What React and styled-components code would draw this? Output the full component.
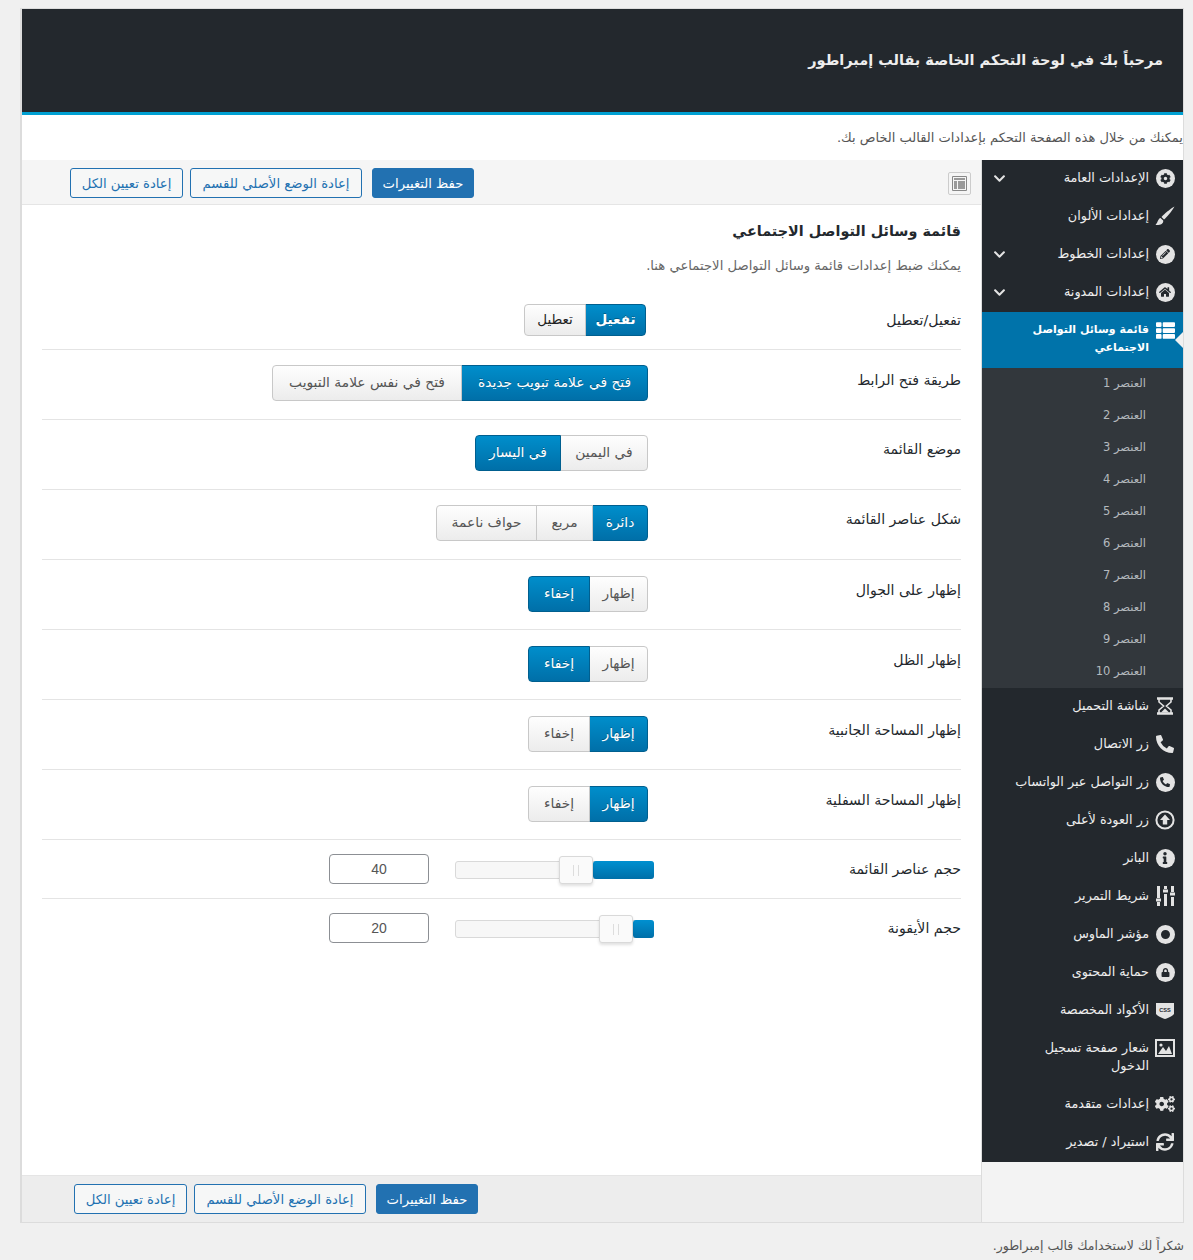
import React from 'react';
import styled, { createGlobalStyle } from 'styled-components';
import {
  FaCog, FaChevronDown, FaPencilAlt, FaHome, FaThList, FaPhoneAlt, FaInfo, FaLock, FaCogs, FaSync,
} from 'react-icons/fa';

const Global = createGlobalStyle`
  html, body { margin: 0; padding: 0; background: #f0f0f0; }
  body { font-family: "DejaVu Sans", "Noto Sans", sans-serif; font-size: 13px; color: #444; }
  * { box-sizing: border-box; }
`;

const Page = styled.div`
  direction: rtl;
  width: 1193px;
  height: 1260px;
  padding: 8px 9px 0 20px;
  overflow: hidden;
`;
const Box = styled.div`
  border: 1px solid #dcdcdc;
  border-left-width: 2px;
  background: #f3f3f3;
`;
const Header = styled.header`
  height: 106px;
  background: #23282d;
  border-bottom: 3px solid #00a0d2;
  padding: 0 20px 2px;
  display: flex;
  align-items: center;
`;
const Title = styled.h1`
  margin: 0;
  color: #eee;
  font-size: 14.5px;
  font-weight: 700;
  line-height: 24px;
`;
const Intro = styled.p`
  margin: 0;
  height: 45px;
  background: #fff;
  font-size: 13px;
  line-height: 45px;
  color: #555;
`;
const Columns = styled.div`
  display: flex;
  align-items: stretch;
`;
const Side = styled.nav`
  width: 201px;
  flex: none;
  align-self: flex-start;
  background: #23282d;
`;
const Item = styled.div`
  position: relative;
  display: flex;
  align-items: flex-start;
  padding: 9px 8px 11px 10px;
  color: ${p => (p.$active ? '#fff' : '#eee')};
  background: ${p => (p.$active ? '#0073aa' : 'transparent')};
  font-weight: ${p => (p.$active ? 700 : 400)};
  font-size: ${p => (p.$active ? 11 : 12.8)}px;
  line-height: 18px;
  ${p => p.$active && `
    &::after {
      content: '';
      position: absolute;
      right: 0;
      top: 20px;
      border: 8px solid transparent;
      border-right: 8px solid #f1f1f1;
      border-left: 0;
    }
  `}
`;
const IconSlot = styled.span`
  width: 20px;
  height: 18px;
  flex: none;
  margin-left: 6px;
  display: flex;
  align-items: center;
  justify-content: center;
  color: ${p => (p.$active ? '#fff' : '#e3e3e3')};
`;
const Disc = styled.span`
  width: 19px;
  height: 19px;
  flex: none;
  border-radius: 50%;
  background: #e3e3e3;
  color: #23282d;
  display: flex;
  align-items: center;
  justify-content: center;
`;
const ItemLabel = styled.span`
  flex: 1;
  min-width: 0;
  max-width: 138px;
`;
const Chevron = styled.span`
  flex: none;
  display: flex;
  align-items: center;
  height: 18px;
  margin-right: auto;
  color: #e3e3e3;
  padding-left: 1px;
`;
const SubList = styled.div`
  background: #32373c;
`;
const SubItem = styled.div`
  height: 32px;
  line-height: 31px;
  padding-right: 37px;
  color: #b4b9be;
  font-size: 11.5px;
`;
const Main = styled.main`
  flex: 1;
  min-width: 0;
  display: flex;
  flex-direction: column;
  border-right: 1px solid #dcdcdc;
`;
const Bar = styled.div`
  height: ${p => p.$h}px;
  flex: none;
  display: flex;
  align-items: center;
  justify-content: space-between;
  background: ${p => (p.$footer ? '#ededed' : '#f5f5f5')};
  border-${p => (p.$footer ? 'top' : 'bottom')}: 1px solid #e5e5e5;
  padding-top: ${p => (p.$footer ? 0 : 2)}px;
  padding-right: 10px;
  padding-left: ${p => p.$left}px;
`;
const Expand = styled.span`
  width: 23px;
  height: 23px;
  border: 1px solid #ccc;
  border-radius: 2px;
  background: #f5f5f5;
  display: flex;
  align-items: center;
  justify-content: center;
`;
const Actions = styled.div`
  display: flex;
  align-items: center;
`;
const ActionButton = styled.button`
  font: inherit;
  font-size: 13.2px;
  height: 30px;
  width: ${p => p.$w}px;
  padding: 0;
  margin-left: ${p => p.$gap || 0}px;
  border: 1px solid #2271b1;
  border-radius: 3px;
  background: ${p => (p.$primary ? '#2271b1' : '#f6f7f7')};
  color: ${p => (p.$primary ? '#fff' : '#2271b1')};
`;
const Content = styled.div`
  flex: 1;
  min-height: 970px;
  background: #fff;
  padding: 0 20px;
`;
const SectionTitle = styled.h2`
  margin: 0;
  padding-top: 14px;
  font-size: 14.4px;
  line-height: 24px;
  font-weight: 700;
  color: #23282d;
`;
const SectionText = styled.p`
  margin: 0;
  padding-top: 14px;
  height: 47px;
  font-size: 13.2px;
  line-height: 18px;
  color: #666;
`;
const Row = styled.div`
  display: flex;
  height: ${p => p.$h}px;
  padding-top: ${p => p.$pad}px;
  border-bottom: ${p => (p.$last ? '0' : '1px solid #e4e4e4')};
`;
const Label = styled.div`
  width: 313px;
  flex: none;
  font-size: 14.1px;
  line-height: 20px;
  color: #23282d;
  padding-top: ${p => p.$top}px;
`;
const Segments = styled.div`
  display: flex;
  height: ${p => p.$h}px;
  margin-right: ${p => p.$right || 0}px;
`;
const Segment = styled.button`
  font: inherit;
  font-size: ${p => (p.$strong ? 13.5 : 13.8)}px;
  font-weight: ${p => (p.$strong && p.$on ? 700 : 400)};
  width: ${p => p.$w}px;
  padding: 0 0 2px;
  border: 1px solid ${p => (p.$on ? '#005f8f' : '#c8c8c8')};
  background: ${p => (p.$on ? 'linear-gradient(#008ecb, #006fa8)' : 'linear-gradient(#fefefe, #ececec)')};
  color: ${p => (p.$on ? '#fff' : p.$strong ? '#222' : '#555')};
  text-shadow: ${p => (p.$on ? '0 -1px 0 rgba(0,0,0,.3)' : 'none')};
  &:first-child { border-radius: 0 4px 4px 0; }
  &:last-child { border-radius: 4px 0 0 4px; }
  &:not(:first-child) { margin-right: -1px; }
`;
const SliderField = styled.div`
  display: flex;
  align-items: center;
  height: 30px;
  margin-right: -6px;
`;
const Track = styled.div`
  position: relative;
  width: 199px;
  height: 18px;
  flex: none;
  margin-top: 2px;
  border-radius: 3px;
  border: 1px solid #d9d9d9;
  background: #f7f7f7;
`;
const Fill = styled.div`
  position: absolute;
  top: -1px;
  bottom: -1px;
  right: -1px;
  border-radius: 3px;
  background: linear-gradient(#0090d0, #006fa8);
`;
const Handle = styled.div`
  position: absolute;
  top: -6px;
  width: 34px;
  height: 28px;
  border: 1px solid #d9d9d9;
  border-radius: 3px;
  background: #fafafa;
  box-shadow: 0 2px 3px rgba(0,0,0,.12);
  &::before {
    content: '';
    position: absolute;
    top: 8px;
    left: 13px;
    width: 4px;
    height: 11px;
    border-left: 1px solid #ddd;
    border-right: 1px solid #ddd;
  }
`;
const NumberBox = styled.div`
  width: 100px;
  height: 30px;
  margin-right: 26px;
  border: 1px solid #8c8f94;
  border-radius: 4px;
  background: #fff;
  display: flex;
  align-items: center;
  justify-content: center;
  font-family: "Liberation Sans", sans-serif;
  font-size: 14px;
  color: #555;
`;
const FooterNote = styled.p`
  margin: 0;
  padding-top: 13px;
  font-size: 12.5px;
  line-height: 20px;
  color: #555;
`;

const D = ({ children }) => <Disc>{children}</Disc>;

const Brush = () => (
  <svg width="20" height="20" viewBox="0 0 20 20" fill="currentColor">
    <path d="M19.5 .5 C15 3 9 8 6.5 11 L9 13.5 C12 11 17 5 19.5 .5Z" />
    <path d="M5.5 12 C3 12.5 3.2 16 .5 19 C5 19.5 8.8 17.5 8.2 14.4Z" />
  </svg>
);
const Hourglass = () => (
  <svg width="18" height="18" viewBox="0 0 18 18" fill="none" stroke="currentColor">
    <path d="M1 1.5H17M1 16.5H17" strokeWidth="2.4" />
    <path d="M3 2V5L7.6 9L3 13V16M15 2V5L10.4 9L15 13V16" strokeWidth="1.6" />
    <path d="M5 15.5L9 11.5L13 15.5Z" fill="currentColor" strokeWidth="0" />
  </svg>
);
const Ring = () => (
  <svg width="19" height="19" viewBox="0 0 19 19"><circle cx="9.5" cy="9.5" r="7" fill="none" stroke="currentColor" strokeWidth="5" /></svg>
);
const UpRing = () => (
  <svg width="20" height="20" viewBox="0 0 20 20">
    <circle cx="10" cy="10" r="8.6" fill="none" stroke="currentColor" strokeWidth="2" />
    <path d="M10 4.6L15 10H12.2V14.6H7.8V10H5Z" fill="currentColor" />
  </svg>
);
const Sliders = () => (
  <svg width="19" height="20" viewBox="0 0 19 20" fill="currentColor">
    <path d="M1 0h3v12H1zM1 16h3v4H1zM0 12.5h5v3H0z" />
    <path d="M8 0h3v3H8zM8 8h3v12H8zM7 3.5h5v3H7z" />
    <path d="M15 0h3v6h-3zM15 11h3v9h-3zM14 6.5h5v3h-5z" />
  </svg>
);
const Shield = () => (
  <svg width="20" height="20" viewBox="0 0 20 20">
    <path d="M1 3H19V14C16 17 13 18 10 19C7 18 4 17 1 14Z" fill="currentColor" />
    <text x="10" y="11.5" fontSize="5.6" fontWeight="700" textAnchor="middle" fill="#23282d" fontFamily="Liberation Sans, sans-serif" direction="ltr">CSS</text>
  </svg>
);
const Picture = () => (
  <svg width="20" height="18" viewBox="0 0 20 18">
    <path d="M1 1H19V17H1Z" fill="none" stroke="currentColor" strokeWidth="2" />
    <path d="M3 15L8 8L11 12L14 7L17 15Z" fill="currentColor" />
    <circle cx="6" cy="6" r="1.6" fill="currentColor" />
  </svg>
);

const menuTop = [
  { t: 'الإعدادات العامة', i: <D><FaCog size={11} /></D>, c: true },
  { t: 'إعدادات الألوان', i: <Brush /> },
  { t: 'إعدادات الخطوط', i: <D><FaPencilAlt size={10} /></D>, c: true },
  { t: 'إعدادات المدونة', i: <D><FaHome size={12} /></D>, c: true },
];
const subs = Array.from({ length: 10 }, (_, i) => `العنصر ${i + 1}`);
const menuBottom = [
  { t: 'شاشة التحميل', i: <Hourglass /> },
  { t: 'زر الاتصال', i: <FaPhoneAlt size={18} /> },
  { t: 'زر التواصل عبر الواتساب', i: <D><FaPhoneAlt size={10} /></D> },
  { t: 'زر العودة لأعلى', i: <UpRing /> },
  { t: 'البانر', i: <D><FaInfo size={12} /></D> },
  { t: 'شريط التمرير', i: <Sliders /> },
  { t: 'مؤشر الماوس', i: <Ring /> },
  { t: 'حماية المحتوى', i: <D><FaLock size={9} /></D> },
  { t: 'الأكواد المخصصة', i: <Shield /> },
  { t: 'شعار صفحة تسجيل الدخول', i: <Picture /> },
  { t: 'إعدادات متقدمة', i: <FaCogs size={20} /> },
  { t: 'استيراد / تصدير', i: <FaSync size={18} /> },
];

const ButtonSet = () => (
  <Actions>
    <ActionButton $primary $w={102} $gap={10}>حفظ التغييرات</ActionButton>
    <ActionButton $w={172} $gap={7}>إعادة الوضع الأصلي للقسم</ActionButton>
    <ActionButton $w={113}>إعادة تعيين الكل</ActionButton>
  </Actions>
);

const rows = [
  { l: 'تفعيل/تعطيل', pad: 14, h: 60, top: 6, sh: 32, right: 2, strong: true, seg: [['تفعيل', 61, true], ['تعطيل', 62, false]] },
  { l: 'طريقة فتح الرابط', pad: 15, h: 70, top: 5, sh: 36, seg: [['فتح في علامة تبويب جديدة', 187, true], ['فتح في نفس علامة التبويب', 190, false]] },
  { l: 'موضع القائمة', pad: 15, h: 70, top: 4, sh: 36, seg: [['في اليمين', 88, false], ['في اليسار', 86, true]] },
  { l: 'شكل عناصر القائمة', pad: 15, h: 70, top: 4, sh: 36, seg: [['دائرة', 56, true], ['مربع', 57, false], ['حواف ناعمة', 101, false]] },
  { l: 'إظهار على الجوال', pad: 16, h: 70, top: 4, sh: 36, seg: [['إظهار', 59, false], ['إخفاء', 62, true]] },
  { l: 'إظهار الظل', pad: 16, h: 70, top: 4, sh: 36, seg: [['إظهار', 59, false], ['إخفاء', 62, true]] },
  { l: 'إظهار المساحة الجانبية', pad: 16, h: 70, top: 4, sh: 36, seg: [['إظهار', 59, true], ['إخفاء', 62, false]] },
  { l: 'إظهار المساحة السفلية', pad: 16, h: 70, top: 4, sh: 36, seg: [['إظهار', 59, true], ['إخفاء', 62, false]] },
];
const sliders = [
  { l: 'حجم عناصر القائمة', v: 40, fill: 61 },
  { l: 'حجم الأيقونة', v: 20, fill: 21 },
];

export default function App() {
  return (
    <Page dir="rtl">
      <Global />
      <Box>
        <Header><Title>مرحباً بك في لوحة التحكم الخاصة بقالب إمبراطور</Title></Header>
        <Intro>يمكنك من خلال هذه الصفحة التحكم بإعدادات القالب الخاص بك.</Intro>
        <Columns>
          <Side>
            {menuTop.map(m => (
              <Item key={m.t}>
                <IconSlot>{m.i}</IconSlot>
                <ItemLabel>{m.t}</ItemLabel>
                {m.c && <Chevron><FaChevronDown size={13} /></Chevron>}
              </Item>
            ))}
            <Item $active>
              <IconSlot $active><FaThList size={19} /></IconSlot>
              <ItemLabel>قائمة وسائل التواصل الاجتماعي</ItemLabel>
            </Item>
            <SubList>{subs.map(s => <SubItem key={s}>{s}</SubItem>)}</SubList>
            {menuBottom.map(m => (
              <Item key={m.t}>
                <IconSlot>{m.i}</IconSlot>
                <ItemLabel>{m.t}</ItemLabel>
              </Item>
            ))}
          </Side>
          <Main>
            <Bar $h={45} $left={48}>
              <Expand>
                <svg width="15" height="15" viewBox="0 0 15 15">
                  <path d="M.5.5h14v14H.5z" fill="none" stroke="#888" />
                  <path d="M2 2h11v2H2zM2 5h3v8H2zM6 5h7v8H6z" fill="#999" />
                </svg>
              </Expand>
              <ButtonSet />
            </Bar>
            <Content>
              <SectionTitle>قائمة وسائل التواصل الاجتماعي</SectionTitle>
              <SectionText>يمكنك ضبط إعدادات قائمة وسائل التواصل الاجتماعي هنا.</SectionText>
              {rows.map(r => (
                <Row key={r.l} $h={r.h} $pad={r.pad}>
                  <Label $top={r.top}>{r.l}</Label>
                  <Segments $h={r.sh} $right={r.right}>
                    {r.seg.map(([t, w, on]) => (
                      <Segment key={t} $w={w} $on={on} $strong={r.strong}>{t}</Segment>
                    ))}
                  </Segments>
                </Row>
              ))}
              {sliders.map((s, i) => (
                <Row key={s.l} $h={59} $pad={14} $last={i === 1}>
                  <Label $top={5}>{s.l}</Label>
                  <SliderField>
                    <Track>
                      <Fill style={{ width: `${s.fill}px` }} />
                      <Handle style={{ right: `${s.fill - 1}px` }} />
                    </Track>
                    <NumberBox dir="ltr">{s.v}</NumberBox>
                  </SliderField>
                </Row>
              ))}
            </Content>
            <Bar $h={47} $left={52} $footer>
              <span />
              <ButtonSet />
            </Bar>
          </Main>
        </Columns>
      </Box>
      <FooterNote>شكراً لك لاستخدامك قالب إمبراطور.</FooterNote>
    </Page>
  );
}
